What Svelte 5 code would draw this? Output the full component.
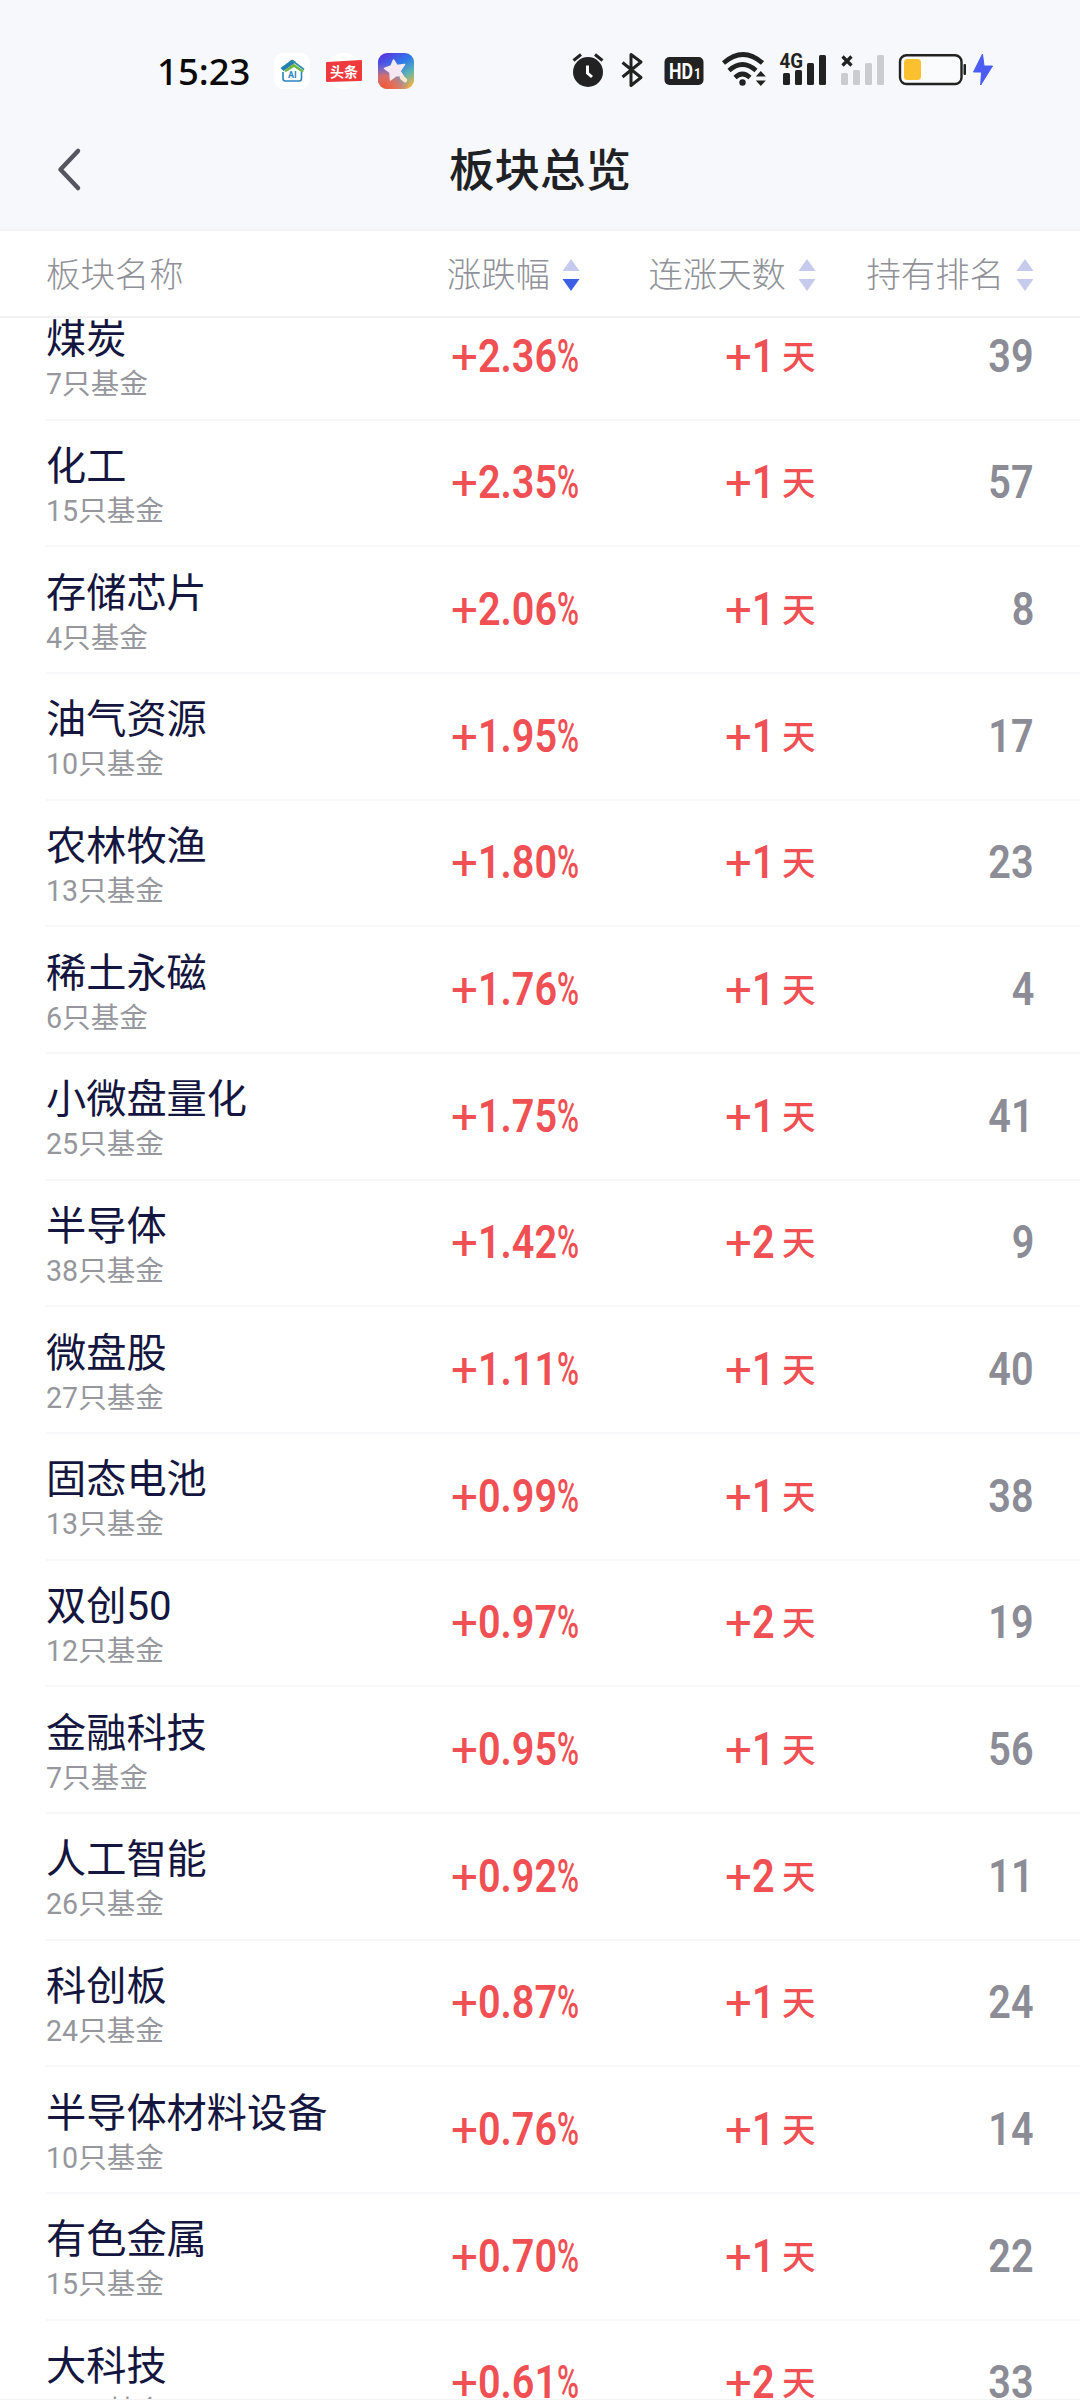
<script>
  const rows = [
    ['煤炭', 7, '2.36', 1, 39],
    ['化工', 15, '2.35', 1, 57],
    ['存储芯片', 4, '2.06', 1, 8],
    ['油气资源', 10, '1.95', 1, 17],
    ['农林牧渔', 13, '1.80', 1, 23],
    ['稀土永磁', 6, '1.76', 1, 4],
    ['小微盘量化', 25, '1.75', 1, 41],
    ['半导体', 38, '1.42', 2, 9],
    ['微盘股', 27, '1.11', 1, 40],
    ['固态电池', 13, '0.99', 1, 38],
    ['双创50', 12, '0.97', 2, 19],
    ['金融科技', 7, '0.95', 1, 56],
    ['人工智能', 26, '0.92', 2, 11],
    ['科创板', 24, '0.87', 1, 24],
    ['半导体材料设备', 10, '0.76', 1, 14],
    ['有色金属', 15, '0.70', 1, 22],
    ['大科技', 15, '0.61', 2, 33]
  ].map(([name, funds, change, days, rank]) => ({ name, funds, change, days, rank }));
</script>

{#snippet sorter(down)}
  <svg class="sorter" width="18" height="34" viewBox="0 0 18 34">
    <path d="M9 1L17.5 13H.5z" fill="#c6caec" />
    <path d="M9 33L17.5 21H.5z" fill={down ? '#3d5fe6' : '#c6caec'} />
  </svg>
{/snippet}

<div class="screen">
  <header>
    <div class="status">
      <span class="time">15:23</span>
      <div class="apps">
        <svg width="36" height="36" viewBox="0 0 36 36">
          <rect width="36" height="36" rx="9" fill="#fff" />
          <path d="M9 19v6.500q0 2.500 2.500 2.500h13.500q2.500 0 2.500-2.500V19" fill="none" stroke="#2b83c0" stroke-width="1.600" />
          <path d="M6.500 15L18 6.500 22 9 9.500 18z" fill="#257fae" />
          <path d="M10 18L19.500 10.500 30 18 28 19.500 20 14 12 19z" fill="#6fb544" />
          <path d="M18 7.500L30 16.500" stroke="#2b8fa8" stroke-width="1.600" />
          <text x="18.300" y="25" text-anchor="middle" font-size="9" font-weight="700" fill="#2b83c0">AI</text>
        </svg>
        <svg width="38" height="36" viewBox="0 0 38 36">
          <circle cx="19" cy="18" r="18" fill="#fff" />
          <path d="M2 9L36 7q1 0 1 1V27q0 1-1 1L2 29q-1 0-1-1V10q0-1 1-1z" fill="#ee3a3d" />
          <text x="19" y="23.500" text-anchor="middle" font-size="14" font-weight="700" fill="#fff">头条</text>
        </svg>
        <svg width="36" height="36" viewBox="0 0 36 36">
          <defs>
            <linearGradient id="sky" x1=".2" y1="0" x2=".8" y2="1">
              <stop offset="0" stop-color="#5a35e0" />
              <stop offset=".4" stop-color="#2f7bea" />
              <stop offset=".7" stop-color="#5fb5b0" />
              <stop offset="1" stop-color="#f6b23a" />
            </linearGradient>
            <radialGradient id="glow" cx=".15" cy="1" r=".75">
              <stop offset="0" stop-color="#f5552f" />
              <stop offset=".5" stop-color="#ee6a5a" stop-opacity=".85" />
              <stop offset="1" stop-color="#b05ac0" stop-opacity="0" />
            </radialGradient>
          </defs>
          <rect width="36" height="36" rx="9" fill="url(#sky)" />
          <rect width="36" height="36" rx="9" fill="url(#glow)" />
          <path d="M15.500 7l3.500 5.500 7.500-1-4.500 6.500 3 5-6.500-.5-6 4.500-.5-7.500-5.500-4 6.500-2.500z" fill="#f4e9f3" stroke="#f4e9f3" stroke-width="1.500" stroke-linejoin="round" />
          <path d="M24 24.500l3 2.700" stroke="#fbe6cf" stroke-width="4.500" stroke-linecap="round" />
        </svg>
      </div>
      <div class="signals">
        <svg width="48" height="48" viewBox="568 48 48 48">
          <circle cx="588" cy="73" r="15" fill="#222" />
          <path d="M573.500 61.500l7.500-6M602.500 61.500l-7.500-6" stroke="#222" stroke-width="3" />
          <path d="M587.500 66.500v7.500l4.500 4" fill="none" stroke="#fff" stroke-width="3" />
        </svg>
        <svg width="40" height="48" viewBox="616 48 40 48">
          <path d="M622.500 63.500l18.500 15-10 8V55.500l10 7.500-18.500 15" fill="none" stroke="#222" stroke-width="3" stroke-linejoin="round" />
        </svg>
        <svg width="60" height="48" viewBox="656 48 60 48">
          <rect x="664.500" y="58" width="39" height="28" rx="5" fill="#222" />
          <text x="669" y="80" font-size="22" font-weight="700" textLength="24" lengthAdjust="spacingAndGlyphs" fill="#fff">HD</text>
          <text x="694" y="80" font-size="14" font-weight="700" textLength="7" lengthAdjust="spacingAndGlyphs" fill="#fff">1</text>
        </svg>
        <svg width="58" height="48" viewBox="716 48 58 48">
          <g fill="none" stroke="#222" stroke-width="4.600">
            <path d="M723.500 64q19.500-17 39 0" />
            <path d="M729 71.500q13.500-12 27 0" />
            <path d="M735 78.500q7.500-7 15 0" />
          </g>
          <circle cx="742.500" cy="83.500" r="3.200" fill="#222" />
          <path d="M760.800 72l5 5.500h-10zM760.800 87l5-5.500h-10z" fill="#222" />
        </svg>
        <svg width="58" height="48" viewBox="774 48 58 48">
          <text x="779.500" y="69" font-size="20" font-weight="700" textLength="23.500" lengthAdjust="spacingAndGlyphs" fill="#222">4G</text>
          <g fill="#222">
            <rect x="783" y="74" width="7" height="12" rx="1.500" />
            <rect x="795" y="71" width="7" height="15" rx="1.500" />
            <rect x="807" y="64" width="7" height="22" rx="1.500" />
            <rect x="819" y="56" width="7" height="30" rx="1.500" />
          </g>
        </svg>
        <svg width="60" height="48" viewBox="832 48 60 48">
          <g fill="#cbccd0">
            <rect x="841" y="74" width="7" height="12" rx="1.500" />
            <rect x="853" y="71" width="7" height="15" rx="1.500" />
            <rect x="865" y="64" width="7" height="22" rx="1.500" />
            <rect x="877" y="56" width="7" height="30" rx="1.500" />
          </g>
          <path d="M842.500 57.500l9 9m0-9l-9 9" stroke="#222" stroke-width="3.200" />
        </svg>
        <svg width="112" height="48" viewBox="892 48 112 48">
          <rect x="900" y="56.200" width="61.500" height="28.800" rx="6.500" fill="#fff" fill-opacity=".4" stroke="#222" stroke-width="2.400" />
          <rect x="904" y="60" width="17" height="21" rx="3.500" fill="#fbc02f" />
          <rect x="963.500" y="65" width="2.500" height="11" rx="1" fill="#222" />
          <path d="M982.500 55L973.500 73h8l-.8 13L992.500 67h-8.500z" fill="#4a5cf2" stroke="#4a5cf2" stroke-linejoin="round" />
        </svg>
      </div>
    </div>
    <div class="titlebar">
      <svg class="back" width="30" height="48" viewBox="0 0 30 48">
        <path d="M24 6L6.500 24.500 24 43" fill="none" stroke="#55565f" stroke-width="4.500" stroke-linecap="round" stroke-linejoin="round" />
      </svg>
      <h1>板块总览</h1>
    </div>
  </header>

  <div class="columns head">
    <span class="first">板块名称</span>
    <span class="sort">涨跌幅{@render sorter(true)}</span>
    <span class="sort">连涨天数{@render sorter(false)}</span>
    <span class="sort">持有排名{@render sorter(false)}</span>
  </div>

  <div class="viewport">
    <ul>
      {#each rows as row}
        <li class="columns">
          <div class="first">
            <div class="name">{row.name}</div>
            <div class="funds">{row.funds}只基金</div>
          </div>
          <div class="value up">
            <span class="plus">+</span><span class="digits change">{row.change}</span><span class="percent">%</span>
          </div>
          <div class="value up">
            <span class="plus">+</span><span class="digits days">{row.days}</span><span class="unit">天</span>
          </div>
          <div class="value rank"><span class="digits">{row.rank}</span></div>
        </li>
      {/each}
    </ul>
  </div>
</div>

<style>
  :global(body) {
    background: #fff;
  }
  .screen {
    width: 1080px;
    height: 2400px;
    display: flex;
    flex-direction: column;
    overflow: hidden;
    box-sizing: border-box;
    border-bottom: 1px solid #f3f3f5;
    font-family: Roboto, 'Noto Sans CJK SC', sans-serif;
    background: #fff;
  }
  header {
    height: 231px;
    flex: none;
    background: #f7f8fc;
    border-bottom: 2px solid #f3f3f6;
    box-sizing: border-box;
  }
  svg {
    display: block;
    flex: none;
  }
  .status {
    display: flex;
    align-items: center;
    height: 112px;
    padding: 30px 0 0 157px;
    box-sizing: border-box;
  }
  .time {
    width: 117px;
    font: 500 36.500px/48px 'Noto Sans', sans-serif;
    color: #0a0a0a;
  }
  .apps {
    display: flex;
    width: 294px;
    gap: 15px;
  }
  .signals {
    display: flex;
  }
  .titlebar {
    display: grid;
    grid-template-columns: 1fr auto 1fr;
    align-items: center;
    height: 114px;
  }
  .back {
    margin-left: 54px;
  }
  h1 {
    margin: 0;
    padding-top: 5px;
    font-size: 45.500px;
    font-weight: 500;
    line-height: 60px;
    color: #202124;
  }
  .columns {
    display: grid;
    grid-template-columns: 401px 179px 236px 218px;
    box-sizing: border-box;
    padding-right: 46px;
  }
  .first {
    padding-left: 46px;
    white-space: nowrap;
  }
  .head {
    flex: none;
    height: 87px;
    padding-top: 2px;
    align-items: center;
    border-bottom: 2px solid #f1f1f4;
    font-size: 34.400px;
    font-weight: 300;
    line-height: 44px;
    color: #909198;
  }
  .sort {
    display: flex;
    justify-content: flex-end;
    align-items: center;
    gap: 12px;
    white-space: nowrap;
  }
  .viewport {
    flex: 1;
    min-height: 0;
    overflow: hidden;
  }
  ul {
    list-style: none;
    margin: -24px 0 0;
    padding: 0;
  }
  li {
    height: 126.670px;
    align-items: center;
    background: linear-gradient(#f8f8fa, #f8f8fa) 46px 100% / 100% 2px no-repeat;
  }
  .name {
    padding-top: 6px;
    font-size: 40.200px;
    line-height: 48px;
    color: #14163f;
  }
  .funds {
    font-size: 28.600px;
    line-height: 40px;
    color: #96979d;
  }
  .value {
    display: flex;
    justify-content: flex-end;
    align-items: baseline;
    height: 60px;
    padding-bottom: 3px;
    font-size: 46px;
    line-height: 60px;
    font-weight: 500;
  }
  .up {
    color: #f04f53;
  }
  .rank {
    color: #8b8c96;
  }
  .digits {
    display: block;
    font-weight: 600;
    transform: scaleX(0.86);
    transform-origin: 100% 50%;
  }
  .plus {
    width: 26px;
    font-weight: 400;
    transform: translate(-0.5px, 1px) scale(1.03);
  }
  .change,
  .days {
    transform-origin: 0 50%;
  }
  .change {
    width: 79px;
  }
  .days {
    width: 30px;
  }
  .percent {
    width: 23px;
    font-weight: 500;
    transform: scaleX(0.65);
    transform-origin: 0 50%;
  }
  .unit {
    font-size: 33.500px;
    line-height: 40px;
    width: 34px;
    transform: translateY(-3px);
  }
</style>
